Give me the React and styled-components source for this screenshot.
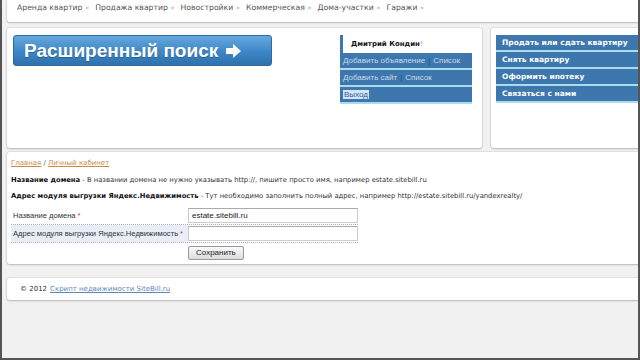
import React from 'react'
import styled, { createGlobalStyle } from 'styled-components'

const GlobalStyle = createGlobalStyle`
  html, body { margin: 0; padding: 0; background: #f1f1f1; overflow: hidden; }
  body { font-family: "DejaVu Sans", Verdana, sans-serif; }
`

const topLinks = ['Аренда квартир', 'Продажа квартир', 'Новостройки', 'Коммерческая', 'Дома-участки', 'Гаражи']
const sideMenu = ['Продать или сдать квартиру', 'Снять квартиру', 'Оформить ипотеку', 'Связаться с нами']

export default function App() {
  return (
    <>
      <GlobalStyle />
      <Frame>
        <Page>
          <TopNav>
            {topLinks.map((t) => (
              <NavItem key={t}>
                {t} <Raquo>»</Raquo>
              </NavItem>
            ))}
          </TopNav>

          <Header>
            <Panel $width="475px">
              <SearchButton>
                Расширенный поиск
                <svg width="15" height="14" viewBox="0 0 15 14">
                  <polygon points="0,4 7,4 7,0 15,7 7,14 7,10 0,10" fill="#fff" />
                </svg>
              </SearchButton>
              <UserMenu>
                <UserName>
                  Дмитрий Кондин<span>!</span>
                </UserName>
                <UserRow>
                  Добавить объявление <Pipe>|</Pipe> Список
                </UserRow>
                <UserRow>
                  Добавить сайт <Pipe>|</Pipe> Список
                </UserRow>
                <UserRow>
                  <Selected>Выход</Selected>
                </UserRow>
              </UserMenu>
            </Panel>
            <SidePanel>
              {sideMenu.map((t) => (
                <SideItem key={t}>{t}</SideItem>
              ))}
            </SidePanel>
          </Header>

          <Content>
            <Crumbs>
              <CrumbLink>Главная</CrumbLink> / <CrumbLink>Личный кабинет</CrumbLink>
            </Crumbs>
            <Hint>
              <b>Название домена</b> - В названии домена не нужно указывать http://, пишите просто имя, например estate.sitebill.ru
            </Hint>
            <Hint>
              <b>Адрес модуля выгрузки Яндекс.Недвижимость</b> - Тут необходимо заполнить полный адрес, например http://estate.sitebill.ru/yandexrealty/
            </Hint>
            <Form>
              <FormRow>
                <Label>
                  Название домена <Req>*</Req>
                </Label>
                <Input defaultValue="estate.sitebill.ru" />
              </FormRow>
              <FormRow $alt>
                <Label $alt>
                  Адрес модуля выгрузки Яндекс.Недвижимость <Req>*</Req>
                </Label>
                <Input defaultValue="" />
              </FormRow>
              <FormRow>
                <Label />
                <SaveButton>Сохранить</SaveButton>
              </FormRow>
            </Form>
          </Content>

          <Footer>
            © 2012 <FooterLink>Скрипт недвижимости SiteBill.ru</FooterLink>
          </Footer>
        </Page>
      </Frame>
    </>
  )
}

const Frame = styled.div`
  width: 640px;
  height: 360px;
  box-sizing: border-box;
  border-left: 2px solid #555;
  border-right: 2px solid #555;
  border-bottom: 2px solid #555;
  background: #f1f1f1;
  overflow: hidden;
`

const Page = styled.div`
  width: 660px;
  padding-left: 5px;
`

const Box = styled.div`
  background: #fff;
  border-radius: 3px;
  box-shadow: 0 1px 2px rgba(0, 0, 0, 0.18), 0 0 0 1px #e2e2e2;
`

const TopNav = styled(Box)`
  height: 22px;
  box-sizing: border-box;
  border-radius: 0 0 3px 3px;
  display: flex;
  gap: 6px;
  padding: 3px 0 0 10px;
  font-size: 7.7px;
  color: #555;
`

const NavItem = styled.span`
  white-space: nowrap;
`

const Raquo = styled.span`
  color: #aaa;
  font-size: 7px;
`

const Header = styled.div`
  display: flex;
  gap: 9px;
  margin-top: 6px;
  height: 120px;
`

const Panel = styled(Box)`
  width: ${(p) => p.$width};
  box-sizing: border-box;
  display: flex;
  justify-content: space-between;
  align-items: flex-start;
  padding: 7px 10px 0 6px;
`

const SearchButton = styled.button`
  width: 259px;
  height: 31px;
  border: 1px solid #2f6aa0;
  border-radius: 3px;
  background: linear-gradient(#66a8df, #3d86c6 55%, #2e71ad);
  color: #fff;
  font-family: "Liberation Sans", Arial, sans-serif;
  font-weight: bold;
  font-size: 19px;
  text-align: left;
  padding: 0 0 0 10px;
  display: flex;
  align-items: center;
  gap: 8px;
  text-shadow: 0 1px 1px rgba(0, 0, 0, 0.25);
`

const UserMenu = styled.div`
  width: 132px;
  font-family: "Liberation Sans", Arial, sans-serif;
  font-size: 8px;
`

const UserName = styled.div`
  height: 18px;
  border-left: 3px solid #3d77ad;
  padding-left: 8px;
  display: flex;
  align-items: center;
  font-family: "DejaVu Sans", Verdana, sans-serif;
  font-weight: bold;
  font-size: 7px;
  color: #111;
  span { color: #999; font-weight: normal; }
`

const UserRow = styled.div`
  height: 15px;
  background: #3d77ad;
  border-bottom: 2px solid #a9dcee;
  color: #c9dbee;
  display: flex;
  align-items: center;
  gap: 3px;
  padding-left: 3px;
  white-space: nowrap;
`

const Pipe = styled.span`
  color: #1d4f80;
`

const Selected = styled.span`
  background: #d6e4f6;
  color: #2d5f95;
  padding: 0 1px;
`

const SidePanel = styled(Box)`
  flex: 1;
  padding: 7px 0 0 5px;
  border-radius: 3px 0 0 3px;
`

const SideItem = styled.div`
  height: 15px;
  background: #3d77ad;
  border-bottom: 2px solid #a9dcee;
  color: #fff;
  font-weight: bold;
  font-size: 7.5px;
  display: flex;
  align-items: center;
  padding-left: 6px;
`

const Content = styled(Box)`
  margin-top: 4px;
  height: 112px;
  box-sizing: border-box;
  padding: 6px 4px;
  font-family: "DejaVu Sans", Verdana, sans-serif;
  font-size: 6.8px;
  color: #333;
`

const Crumbs = styled.div`
  height: 11px;
  line-height: 11px;
  font-size: 7px;
  color: #666;
`

const CrumbLink = styled.a`
  color: #c98a45;
  text-decoration: underline;
`

const Hint = styled.div`
  margin-top: 6px;
  line-height: 10px;
  white-space: nowrap;
  b { color: #111; }
`

const Form = styled.div`
  margin-top: 6px;
  width: 347px;
  font-family: "Liberation Sans", Arial, sans-serif;
  font-size: 8px;
`

const FormRow = styled.div`
  display: flex;
  align-items: center;
  height: 17px;
  border-top: ${(p) => (p.$alt ? '1px dotted #aab' : '0')};
  border-bottom: ${(p) => (p.$alt ? '1px dotted #aab' : '0')};
`

const Label = styled.div`
  width: 177px;
  flex-shrink: 0;
  height: 100%;
  box-sizing: border-box;
  padding-left: 2px;
  display: flex;
  align-items: center;
  background: ${(p) => (p.$alt ? '#e9edf5' : 'transparent')};
  color: #333;
  font-size: 7.6px;
  white-space: nowrap;
  overflow: hidden;
`

const Req = styled.span`
  color: #d33;
  margin-left: 2px;
`

const Input = styled.input`
  width: 170px;
  height: 15px;
  box-sizing: border-box;
  border: 1px solid #ccc;
  border-top-color: #aaa;
  font-family: "Liberation Sans", Arial, sans-serif;
  font-size: 8px;
  padding: 0 3px;
  color: #222;
`

const SaveButton = styled.button`
  height: 14px;
  margin-top: 2px;
  padding: 0 7px;
  border: 1px solid #999;
  border-radius: 2px;
  background: linear-gradient(#fafafa, #dcdcdc);
  font-family: "Liberation Sans", Arial, sans-serif;
  font-size: 8px;
  color: #222;
`

const Footer = styled(Box)`
  margin-top: 14px;
  height: 22px;
  display: flex;
  align-items: center;
  padding-left: 13px;
  font-family: "DejaVu Sans", Verdana, sans-serif;
  font-size: 7px;
  color: #333;
  gap: 3px;
`

const FooterLink = styled.a`
  color: #5f86b3;
  text-decoration: underline;
`
